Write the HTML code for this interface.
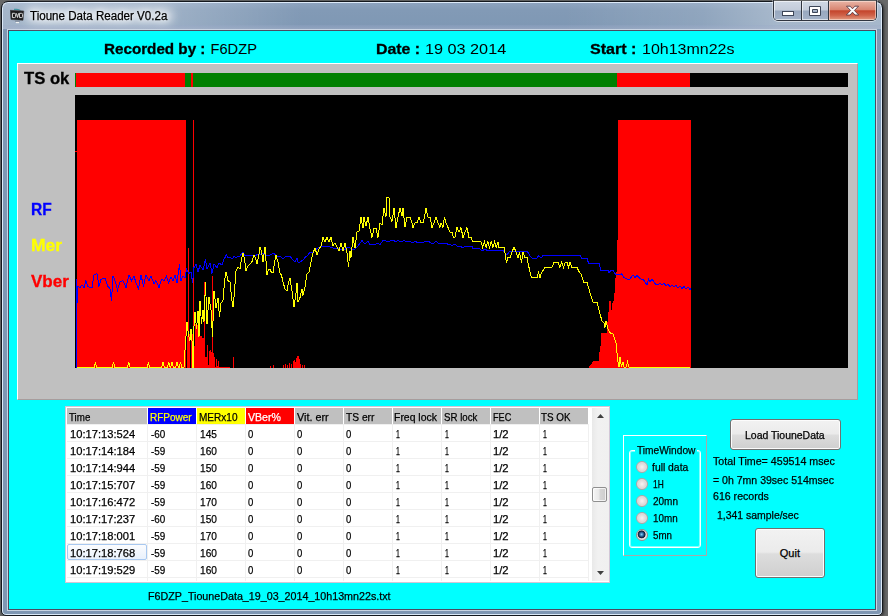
<!DOCTYPE html>
<html>
<head>
<meta charset="utf-8">
<title>Tioune Data Reader V0.2a</title>
<style>
*{box-sizing:border-box;margin:0;padding:0}
html,body{width:888px;height:616px;overflow:hidden}
body{background:#686969;font-family:"Liberation Sans",sans-serif;font-size:11px;color:#000;position:relative}
.abs{position:absolute}
#win{left:1px;top:1px;width:882px;height:615px;border-radius:7px 7px 5px 5px;background:linear-gradient(180deg,#8ea4c0 0px,#829ab6 8px,#7f98b4 24px,#7f97b3 615px);border:1px solid #14181e;box-shadow:inset 0 0 0 1px rgba(225,238,252,.95),1px 1px 3px 0 rgba(0,0,0,.55)}
#client{left:7px;top:29px;width:870px;height:582px;background:#00ffff;border:1px solid #c8d4e2;box-shadow:inset 0 0 0 1px #4a4c62}
.t{position:absolute;white-space:nowrap;line-height:1;transform-origin:0 50%}
#title{left:29px;top:9px;font-size:12px}
.hb{font-weight:bold;font-size:15px}
.hv{font-size:16px}
#panel{left:17px;top:63px;width:841px;height:337px;background:#c0c0c0;border-top:1px solid #fff;border-left:1px solid #fff;border-right:1px solid #a89c9c;border-bottom:1px solid #a89c9c}
#tsbar{left:75px;top:73px;width:773px;height:14px;background:#000}
#chart{left:75px;top:95px}
.lbl{font-weight:bold;font-size:17px}
#grid{left:65px;top:406px;width:545px;height:177px;background:#fff;border:1px solid #d2c6d6}
.hd{position:absolute;top:408px;height:16px;background:#c0c0c0;line-height:17px;padding-left:2px;white-space:nowrap;overflow:hidden}
.c{position:absolute;height:17px;line-height:17px;white-space:nowrap}
.btn{position:absolute;border:1px solid #707070;border-radius:3px;background:linear-gradient(180deg,#f2f2f2 0%,#ebebeb 48%,#dddddd 52%,#cfcfcf 100%);box-shadow:inset 0 0 0 1px #fcfcfc;text-align:center}
#tsbar i{position:absolute;top:0;height:14px}
.gl{position:absolute;background:#f0f0f0}
.sel{left:67px;top:544px;width:80px;height:16px;border:1px solid #a8c8f0;border-radius:2px;background:linear-gradient(180deg,#fbfcfe,#e9f1fc)}
.radio{position:absolute;width:12px;height:12px;border-radius:50%;border:1px solid #b3a3a3;background:radial-gradient(circle at 50% 50%,#f5f2f2 0,#dcd8d8 55%,#e6e6e6 100%)}
.radio.on{border-color:#9a8c8c;background:radial-gradient(circle at 46% 44%,#8fd0f4 0,#2f74ac 22%,#142446 40%,#1a2238 46%,#e0dddd 55%,#efefef 100%)}
</style>
</head>
<body>
<div id="win" class="abs"></div>
<div id="client" class="abs"></div>
<div class="abs" style="left:3px;top:3px;width:878px;height:26px;background:linear-gradient(90deg,rgba(255,255,255,.28) 0,rgba(255,255,255,.22) 170px,rgba(255,255,255,0) 300px,rgba(255,255,255,0) 560px,rgba(255,255,255,.12) 700px,rgba(255,255,255,.3) 775px,rgba(255,255,255,.3) 878px)"></div>
<div class="abs" style="left:3px;top:25px;width:878px;height:4px;background:linear-gradient(180deg,rgba(150,165,200,.25),rgba(170,180,205,.45))"></div>
<div class="abs" style="left:24px;top:7px;width:150px;height:17px;border-radius:8px;background:rgba(255,255,255,.42);filter:blur(5px)"></div>
<div class="abs" style="left:773px;top:0;width:104px;height:21px;border:1px solid #30353f;border-top:0;border-radius:0 0 5px 5px;box-shadow:0 1px 0 rgba(255,255,255,.55),-1px 0 0 rgba(255,255,255,.35),1px 0 0 rgba(255,255,255,.35);overflow:hidden">
<div class="abs" style="left:0;top:1px;width:28px;height:19px;background:linear-gradient(180deg,#d0d8e4 0,#c3ccda 48%,#98a8bf 52%,#a3b2c8 100%);box-shadow:inset 0 0 0 1px rgba(255,255,255,.6)"></div>
<div class="abs" style="left:27px;top:1px;width:1px;height:19px;background:#30353f"></div>
<div class="abs" style="left:28px;top:1px;width:27px;height:19px;background:linear-gradient(180deg,#d0d8e4 0,#c3ccda 48%,#98a8bf 52%,#a3b2c8 100%);box-shadow:inset 0 0 0 1px rgba(255,255,255,.6)"></div>
<div class="abs" style="left:54px;top:1px;width:1px;height:19px;background:#30353f"></div>
<div class="abs" style="left:55px;top:1px;width:47px;height:19px;background:linear-gradient(180deg,#e8b4a6 0,#d98672 45%,#c4452c 52%,#cf6148 75%,#e39a80 100%);box-shadow:inset 0 0 0 1px rgba(255,235,225,.55)"></div>
</div>
<svg class="abs" style="left:773px;top:0" width="104" height="21" viewBox="0 0 104 21">
<rect x="9.5" y="11.5" width="11" height="4" fill="#fff" stroke="#3d4658" stroke-width="1"/>
<path d="M36.5 6.5h11v9h-11z M39.5 9.5v3h5v-3z" fill="#fff" fill-rule="evenodd" stroke="#3d4658" stroke-width="1"/>
<path d="M73.5 6.2 l3.6 0 l2.4 2.6 l2.4 -2.6 l3.6 0 l-4.1 4.3 l4.3 4.5 l-3.7 0 l-2.5 -2.8 l-2.5 2.8 l-3.7 0 l4.3 -4.5 z" fill="#fff" stroke="#5a3a44" stroke-width="0.9"/>
</svg>
<svg class="abs" style="left:10px;top:8px" width="15" height="16" viewBox="0 0 15 16">
<path d="M4 1.3 Q7 0.8 10.5 2.4" stroke="#2f8f9b" stroke-width="1" fill="none"/>
<path d="M0.2 2.3 L13.8 3 L13 12.3 L1 11.5z" fill="#1d1c1e" stroke="#3a3a40" stroke-width="0.6"/>
<path d="M2.4 5.3h2q1.2 0 1.2 1.1v2.1q0 1.1-1.2 1.1h-2z M6.4 5.3l1.1 4.2l1.1-4.2 M9.4 5.3h2q1.2 0 1.2 1.1v2.1q0 1.1-1.2 1.1h-2z" fill="none" stroke="#dcdcdc" stroke-width="1"/>
<path d="M5 13.2h5" stroke="#7d8796" stroke-width="1"/><path d="M5.8 14.6h3.2" stroke="#f4f4f4" stroke-width="1.1"/>
</svg>


<div id="panel" class="abs"></div>
<div id="tsbar" class="abs">
<i style="left:0;width:1px;background:#008000"></i>
<i style="left:1px;width:109px;background:#ff0000"></i>
<i style="left:110px;width:6px;background:#008000"></i>
<i style="left:116px;width:2px;background:#ff0000"></i>
<i style="left:118px;width:424px;background:#008000"></i>
<i style="left:542px;width:73px;background:#ff0000"></i>
</div>
<svg id="chart" class="abs" width="773" height="273" viewBox="0 0 773 273" shape-rendering="crispEdges">
<rect width="773" height="273" fill="#000"/>
<path fill="#ff0000" d="M2 25h109v248h-109zM543 25h73v248h-73zM0 56h2v1h-2zM113 153h1v120h-1zM118 25h1v248h-1zM129 187h1v86h-1zM137 181h1v92h-1zM112 241h1v32h-1zM113 243h1v30h-1zM114 239h1v34h-1zM116 246h1v27h-1zM117 239h1v34h-1zM119 251h1v22h-1zM120 229.333h1v43.6667h-1zM121 233.667h1v39.3333h-1zM122 230h1v43h-1zM123 231.333h1v41.6667h-1zM124 226.667h1v46.3333h-1zM125 241h1v32h-1zM126 241h1v32h-1zM127 243h1v30h-1zM128 243h1v30h-1zM129 256h1v17h-1zM130 262h1v11h-1zM131 262h1v11h-1zM132 250h1v23h-1zM133 270.333h1v2.66667h-1zM134 255.667h1v17.3333h-1zM135 255h1v18h-1zM136 257.333h1v15.6667h-1zM137 263.667h1v9.33333h-1zM138 258h1v15h-1zM139 262h1v11h-1zM140 272h1v1h-1zM141 264h1v9h-1zM142 271h1v2h-1zM143 266h1v7h-1zM144 272h1v1h-1zM145 272h1v1h-1zM146 272h1v1h-1zM147 272h1v1h-1zM148 272h1v1h-1zM149 272h1v1h-1zM150 272h1v1h-1zM151 272h1v1h-1zM152 272h1v1h-1zM153 272h1v1h-1zM154 272h1v1h-1zM158 262h1v11h-1zM195 271h1v2h-1zM198 270h1v3h-1zM208 270h1v3h-1zM210 269h1v4h-1zM212 270h1v3h-1zM214 268h1v5h-1zM216 269h1v4h-1zM218 266h1v7h-1zM219 265h1v8h-1zM220 267h1v6h-1zM221 263h1v10h-1zM222 261h1v12h-1zM223 261h1v12h-1zM224 264h1v9h-1zM225 269h1v4h-1zM227 270h1v3h-1zM229 270h1v3h-1zM514 271h1v2h-1zM515 270h1v3h-1zM516 269h1v4h-1zM517 267h1v6h-1zM518 266h1v7h-1zM519 266h1v7h-1zM520 266h1v7h-1zM521 266h1v7h-1zM522 266h1v7h-1zM523 266h1v7h-1zM524 257h1v16h-1zM525 251h1v22h-1zM526 238h1v35h-1zM527 238h1v35h-1zM528 238h1v35h-1zM529 238h1v35h-1zM530 238h1v35h-1zM531 238h1v35h-1zM532 227h1v46h-1zM533 217h1v56h-1zM534 206h1v67h-1zM535 206h1v67h-1zM536 215h1v58h-1zM537 208h1v65h-1zM538 206h1v67h-1zM539 198h1v75h-1zM540 183h1v90h-1zM541 177h1v96h-1zM542 145h1v128h-1z"/>
<path fill="none" stroke="#0000ff" stroke-width="1" d="M1.0 273.0 L1.0 184.0 L2.0 208.0 L3.0 191.5 L5.0 192.6 L7.0 190.0 L9.0 192.6 L11.0 185.6 L13.0 191.5 L15.0 192.6 L17.0 192.6 L19.0 179.7 L22.0 178.5 L24.0 191.5 L26.0 184.4 L30.0 183.0 L33.0 191.5 L35.0 193.8 L36.5 205.6 L38.0 181.0 L40.0 185.6 L42.5 195.0 L45.0 186.8 L48.0 185.6 L51.0 192.6 L54.0 179.7 L56.5 185.6 L59.0 181.0 L61.0 188.0 L63.5 193.8 L66.0 179.7 L68.5 191.5 L71.0 179.7 L74.0 185.6 L76.0 181.0 L79.0 189.0 L81.0 185.6 L84.0 192.6 L86.5 184.4 L89.0 185.6 L91.5 181.0 L93.5 188.0 L96.0 182.0 L98.0 185.6 L100.0 179.7 L102.0 188.0 L104.5 169.0 L106.0 185.6 L108.0 181.0 L110.0 183.0 L111.5 174.0 L114.0 178.5 L116.0 177.0 L117.5 188.0 L119.0 172.6 L121.0 169.0 L123.0 177.0 L125.0 170.0 L128.0 175.0 L130.5 164.4 L132.0 173.8 L135.0 168.0 L137.0 178.5 L139.0 169.0 L142.0 172.6 L144.0 168.0 L147.0 170.0 L149.0 164.4 L151.5 159.7 L153.0 163.0 L155.0 162.0 L157.0 164.0 L159.0 161.5 L161.0 163.0 L163.0 161.0 L165.0 161.0 L168.0 157.0 L170.0 161.0 L175.0 160.0 L180.0 161.0 L183.0 159.0 L185.0 160.0 L188.0 158.0 L191.0 161.0 L195.0 160.0 L199.0 158.0 L201.0 161.0 L205.0 161.0 L208.0 164.0 L211.0 161.0 L215.0 161.0 L217.0 164.0 L220.0 167.0 L222.0 163.0 L223.0 167.0 L225.0 167.0 L228.0 165.0 L230.0 162.5 L233.0 160.0 L235.0 157.0 L237.0 158.0 L240.0 155.0 L245.0 152.0 L250.0 151.5 L255.0 152.0 L258.0 153.0 L260.0 154.0 L263.0 153.0 L265.0 155.0 L268.0 154.0 L270.0 155.0 L272.0 152.0 L275.0 153.0 L278.0 155.0 L280.0 154.0 L283.0 151.0 L285.0 148.0 L287.0 145.6 L289.0 148.0 L290.0 149.0 L293.0 146.0 L295.0 150.0 L300.0 149.5 L303.0 148.0 L305.0 149.5 L308.0 145.6 L311.0 146.0 L313.0 147.0 L315.0 146.0 L318.0 145.0 L321.0 147.0 L323.0 145.5 L326.0 147.0 L329.0 145.5 L332.0 147.0 L335.0 146.7 L338.0 148.0 L340.0 146.0 L343.0 148.0 L345.0 147.0 L348.0 148.0 L350.0 146.0 L353.0 146.0 L356.0 148.0 L359.0 148.0 L361.0 146.0 L363.0 148.0 L365.0 148.0 L370.0 148.5 L375.0 149.5 L377.0 151.0 L380.0 148.8 L382.0 151.0 L385.0 151.0 L388.0 153.0 L390.0 151.0 L397.0 151.5 L398.0 153.6 L405.0 154.0 L407.0 156.0 L410.0 154.0 L413.0 156.0 L415.0 155.0 L420.0 155.0 L422.0 156.0 L425.0 155.5 L428.0 155.5 L430.0 158.0 L432.0 160.0 L435.0 156.0 L445.0 156.0 L452.0 156.0 L455.0 160.8 L457.0 163.0 L462.0 163.0 L463.5 160.8 L466.0 163.0 L468.0 160.5 L505.0 160.5 L507.0 163.5 L512.0 163.5 L513.5 168.0 L524.0 168.0 L526.0 175.6 L533.0 175.6 L534.0 177.7 L536.0 175.6 L538.0 175.6 L540.0 178.8 L542.0 179.8 L545.0 179.8 L547.0 178.8 L549.0 182.5 L552.0 184.0 L554.0 185.0 L556.0 182.5 L558.0 179.8 L560.0 182.5 L562.0 180.4 L564.0 182.5 L566.0 184.0 L568.0 184.0 L570.0 187.0 L572.0 189.7 L573.5 184.0 L575.0 187.0 L577.0 184.0 L579.0 187.0 L581.0 189.7 L583.0 189.7 L585.0 188.0 L587.0 190.0 L589.0 188.0 L591.0 191.0 L593.0 189.0 L595.0 192.0 L597.0 190.0 L599.0 192.0 L601.0 190.5 L603.0 193.0 L605.0 191.0 L607.0 193.5 L609.0 191.5 L611.0 194.0 L613.0 192.0 L615.0 194.5 L616.0 193.0"/>
<path fill="none" stroke="#ffff00" stroke-width="1" d="M2.0 272.0 L19.2 272.0 L20.4 267.0 L21.6 272.0 L37.3 272.0 L38.5 267.0 L39.7 272.0 L52.6 272.0 L53.8 267.0 L55.0 272.0 L72.2 272.0 L73.4 267.0 L74.6 272.0 L86.8 272.0 L88.0 267.0 L89.2 272.0 L92.6 272.0 L93.8 267.0 L95.0 272.0 L95.8 272.0 L97.0 267.0 L98.2 272.0 L100.8 272.0 L102.0 267.0 L103.2 272.0 L104.4 272.0 L105.6 267.0 L106.8 272.0 L109.0 272.0 L109.5 262.0 L111.0 241.0 L112.0 226.8 L113.5 239.7 L115.0 245.6 L116.0 233.8 L117.5 251.5 L118.0 273.0 L118.5 251.0 L119.0 231.5 L120.0 217.0 L121.5 233.8 L123.0 216.0 L124.0 242.0 L125.0 205.6 L126.5 229.0 L128.0 215.0 L129.0 226.8 L130.5 186.8 L132.0 229.0 L134.0 202.0 L136.0 215.0 L137.5 242.0 L139.0 196.0 L141.0 212.6 L143.0 203.0 L144.5 222.0 L146.0 208.0 L148.0 205.6 L149.5 186.8 L151.0 177.0 L153.0 185.6 L155.0 187.0 L156.5 202.4 L158.0 212.0 L159.5 196.5 L161.0 176.0 L163.0 172.3 L165.0 174.0 L166.5 164.0 L168.0 158.0 L169.5 164.1 L171.0 176.0 L173.0 170.9 L175.0 169.0 L177.0 166.6 L179.0 160.0 L180.5 162.9 L182.0 169.0 L183.5 162.1 L185.0 152.0 L186.5 156.6 L188.0 167.0 L190.0 152.0 L192.0 180.0 L193.5 174.6 L195.0 174.0 L196.5 177.6 L198.0 178.0 L199.5 167.4 L201.0 160.0 L203.0 167.1 L205.0 178.0 L206.5 180.2 L208.0 187.0 L210.0 193.8 L212.0 196.0 L213.5 187.8 L215.0 183.0 L217.0 196.0 L219.0 212.0 L221.0 198.0 L222.0 188.0 L223.0 207.0 L225.0 202.6 L227.0 194.0 L228.0 200.5 L230.0 192.0 L232.0 179.0 L234.0 177.0 L236.0 167.0 L238.0 158.0 L240.0 153.0 L242.0 160.0 L244.0 154.0 L246.0 151.0 L248.0 142.5 L250.0 146.7 L252.0 142.5 L254.0 146.7 L256.0 142.5 L258.0 151.0 L260.0 147.7 L262.0 152.0 L264.0 156.0 L266.0 148.0 L268.0 156.0 L270.0 148.0 L272.0 158.0 L273.5 172.0 L275.0 156.0 L276.0 162.5 L278.0 142.5 L280.0 153.0 L282.0 137.0 L284.0 136.0 L286.0 122.4 L288.0 133.0 L289.0 122.4 L291.0 131.0 L293.0 122.0 L295.0 134.0 L297.0 142.5 L299.0 133.0 L301.0 133.0 L303.0 142.5 L305.0 127.7 L307.0 130.0 L309.0 113.0 L311.0 122.0 L312.0 102.4 L314.0 102.4 L315.0 122.0 L317.0 126.6 L319.0 113.0 L321.0 133.0 L323.0 122.0 L325.0 113.0 L327.0 121.0 L328.0 113.0 L330.0 132.0 L332.0 122.0 L335.0 122.0 L337.0 127.7 L338.0 133.0 L340.0 127.7 L342.0 127.7 L344.0 122.0 L346.0 127.7 L348.0 127.7 L349.5 122.0 L351.0 113.0 L353.0 122.0 L355.0 122.0 L357.0 132.5 L359.0 127.7 L361.0 122.0 L363.0 127.7 L365.0 132.5 L366.0 127.7 L368.0 132.5 L369.5 122.0 L371.0 127.7 L373.0 132.5 L375.0 137.0 L377.0 137.0 L378.5 142.5 L380.0 142.5 L382.0 132.5 L384.0 137.0 L386.0 132.5 L388.0 142.5 L390.0 137.0 L392.0 132.5 L394.0 142.5 L396.0 142.5 L398.0 146.7 L406.0 146.7 L407.7 152.4 L409.4 146.7 L411.1 152.4 L412.8 146.7 L414.5 152.4 L416.2 146.7 L417.9 152.4 L419.6 146.7 L421.3 152.4 L423.0 146.7 L423.0 152.4 L429.0 152.4 L430.0 158.0 L431.5 167.8 L433.0 162.5 L435.0 162.5 L437.0 157.0 L439.0 152.0 L441.0 157.0 L443.0 162.5 L444.5 157.0 L446.5 167.8 L448.0 157.0 L450.0 162.5 L452.0 162.5 L453.0 167.8 L455.0 177.0 L456.5 182.5 L462.0 182.5 L463.5 177.7 L465.0 182.5 L466.5 177.7 L470.0 172.4 L477.0 172.4 L479.0 167.0 L483.0 167.0 L485.0 172.4 L486.5 167.0 L488.5 172.4 L490.5 167.0 L492.0 167.0 L493.5 172.4 L495.0 167.0 L497.0 172.4 L502.0 172.4 L504.0 176.6 L506.0 178.8 L508.5 187.0 L512.0 187.0 L515.0 197.7 L518.0 207.0 L522.0 207.0 L525.0 218.8 L527.0 226.0 L529.0 228.0 L530.0 232.5 L531.0 226.0 L533.0 233.6 L535.0 237.8 L538.0 239.0 L541.0 248.0 L543.0 267.0 L544.0 272.0 L545.0 262.0 L546.5 272.0 L548.0 267.0 L549.0 272.0 L551.0 272.0 L552.5 267.0 L554.0 272.0 L615.0 272.0"/>
</svg>

<div id="grid" class="abs"></div>
<i class="gl" style="left:67px;top:424px;width:522px;height:1px"></i><i class="gl" style="left:67px;top:441px;width:522px;height:1px"></i><i class="gl" style="left:67px;top:458px;width:522px;height:1px"></i><i class="gl" style="left:67px;top:475px;width:522px;height:1px"></i><i class="gl" style="left:67px;top:492px;width:522px;height:1px"></i><i class="gl" style="left:67px;top:509px;width:522px;height:1px"></i><i class="gl" style="left:67px;top:526px;width:522px;height:1px"></i><i class="gl" style="left:67px;top:543px;width:522px;height:1px"></i><i class="gl" style="left:67px;top:560px;width:522px;height:1px"></i><i class="gl" style="left:67px;top:577px;width:522px;height:1px"></i>
<i class="gl" style="left:147px;top:425px;width:1px;height:156px"></i><i class="gl" style="left:196px;top:425px;width:1px;height:156px"></i><i class="gl" style="left:245px;top:425px;width:1px;height:156px"></i><i class="gl" style="left:294px;top:425px;width:1px;height:156px"></i><i class="gl" style="left:343px;top:425px;width:1px;height:156px"></i><i class="gl" style="left:392px;top:425px;width:1px;height:156px"></i><i class="gl" style="left:441px;top:425px;width:1px;height:156px"></i><i class="gl" style="left:490px;top:425px;width:1px;height:156px"></i><i class="gl" style="left:539px;top:425px;width:1px;height:156px"></i><i class="gl" style="left:588px;top:425px;width:1px;height:156px"></i>
<div class="sel abs"></div>
<div class="hd" style="left:67px;width:80px;background:#c0c0c0;color:#000"></div><div class="hd" style="left:148px;width:48px;background:#0000ff;color:#ffff00"></div><div class="hd" style="left:197px;width:48px;background:#ffff00;color:#000"></div><div class="hd" style="left:246px;width:48px;background:#ff0000;color:#fff"></div><div class="hd" style="left:295px;width:48px;background:#c0c0c0;color:#000"></div><div class="hd" style="left:344px;width:48px;background:#c0c0c0;color:#000"></div><div class="hd" style="left:393px;width:48px;background:#c0c0c0;color:#000"></div><div class="hd" style="left:442px;width:48px;background:#c0c0c0;color:#000"></div><div class="hd" style="left:491px;width:48px;background:#c0c0c0;color:#000"></div><div class="hd" style="left:540px;width:48px;background:#c0c0c0;color:#000"></div>









<div class="abs" style="left:592px;top:408px;width:17px;height:173px;background:linear-gradient(90deg,#e9e9e9,#f1f1f1 35%,#f0f0f0)"></div>
<div class="abs" style="left:592px;top:487px;width:15px;height:15px;border:1px solid #8f8f8f;border-radius:2px;background:linear-gradient(90deg,#f5f5f5 0,#e9e9e9 45%,#d6d6d6 55%,#cdcdcd 100%);box-shadow:inset 0 0 0 1px rgba(255,255,255,.7)"></div>
<svg class="abs" style="left:597px;top:414px" width="7" height="4" viewBox="0 0 7 4"><path d="M0 4 L3.5 0 L7 4z" fill="#404040"/></svg>
<svg class="abs" style="left:597px;top:571px" width="7" height="4" viewBox="0 0 7 4"><path d="M0 0 L7 0 L3.5 4z" fill="#404040"/></svg>

<div class="abs" style="left:623px;top:435px;width:84px;height:121px;border:1px solid #fff;border-right-color:#a8a8a8;border-bottom-color:#a8a8a8"></div>
<div class="abs" style="left:629px;top:450px;width:72px;height:98px;border:1px solid #fff;border-radius:3px;box-shadow:inset 0 0 0 1px rgba(255,255,255,.5)"></div>
<div class="abs" style="left:635px;top:448px;width:62px;height:5px;background:#00ffff"></div>
<div class="radio" style="left:636px;top:461px"></div><div class="radio" style="left:636px;top:478px"></div><div class="radio" style="left:636px;top:495px"></div><div class="radio" style="left:636px;top:512px"></div><div class="radio on" style="left:636px;top:529px"></div><div class="btn" style="left:730px;top:419px;width:111px;height:31px;line-height:29px"></div>
<div class="btn" style="left:755px;top:528px;width:70px;height:50px"></div>
<div class="t" style="left:30.40px;top:9.75px;font-size:12.5px;transform:scaleX(0.9266);-webkit-text-stroke:0.25px;text-shadow:0 0 5px #fff,0 0 9px #fff,0 0 12px #fff;">Tioune Data Reader V0.2a</div>
<div class="t" style="left:103.50px;top:41.66px;font-size:14.67px;font-weight:bold;-webkit-text-stroke:0.3px;transform:scaleX(1.0377);">Recorded by :</div>
<div class="t" style="left:210.50px;top:41.66px;font-size:14.67px;">F6DZP</div>
<div class="t" style="left:375.50px;top:41.66px;font-size:14.67px;font-weight:bold;-webkit-text-stroke:0.3px;transform:scaleX(1.0844);">Date :</div>
<div class="t" style="left:425.29px;top:41.66px;font-size:14.67px;transform:scaleX(1.1066);">19 03 2014</div>
<div class="t" style="left:589.50px;top:41.66px;font-size:14.67px;font-weight:bold;-webkit-text-stroke:0.3px;transform:scaleX(1.0973);">Start :</div>
<div class="t" style="left:642.41px;top:41.66px;font-size:14.67px;transform:scaleX(1.0909);">10h13mn22s</div>
<div class="t" style="left:23.60px;top:70.50px;font-size:16px;font-weight:bold;-webkit-text-stroke:0.3px;transform:scaleX(1.0398);">TS ok</div>
<div class="t" style="left:31.03px;top:201.50px;font-size:16px;font-weight:bold;-webkit-text-stroke:0.3px;color:#0000ff;transform:scaleX(0.9730);">RF</div>
<div class="t" style="left:30.91px;top:237.50px;font-size:16px;font-weight:bold;-webkit-text-stroke:0.3px;color:#ffff00;transform:scaleX(1.0945);">Mer</div>
<div class="t" style="left:31.00px;top:273.50px;font-size:16px;font-weight:bold;-webkit-text-stroke:0.3px;color:#ff0000;transform:scaleX(1.0638);">Vber</div>
<div class="t" style="left:69.00px;top:411.50px;font-size:11px;transform:scaleX(0.8864);-webkit-text-stroke:0.25px;">Time</div>
<div class="t" style="left:149.50px;top:411.50px;font-size:11px;color:#ffff00;transform:scaleX(0.9095);-webkit-text-stroke:0.25px;">RFPower</div>
<div class="t" style="left:198.60px;top:411.50px;font-size:11px;transform:scaleX(0.9129);-webkit-text-stroke:0.25px;">MERx10</div>
<div class="t" style="left:247.60px;top:411.50px;font-size:11px;color:#fff;transform:scaleX(0.9607);-webkit-text-stroke:0.25px;">VBer%</div>
<div class="t" style="left:296.50px;top:411.50px;font-size:11px;transform:scaleX(0.9837);-webkit-text-stroke:0.25px;">Vit. err</div>
<div class="t" style="left:345.60px;top:411.50px;font-size:11px;transform:scaleX(0.9290);-webkit-text-stroke:0.25px;">TS err</div>
<div class="t" style="left:394.30px;top:411.50px;font-size:11px;transform:scaleX(0.9489);-webkit-text-stroke:0.25px;">Freq lock</div>
<div class="t" style="left:443.60px;top:411.50px;font-size:11px;transform:scaleX(0.8802);-webkit-text-stroke:0.25px;">SR lock</div>
<div class="t" style="left:492.60px;top:411.50px;font-size:11px;transform:scaleX(0.8297);-webkit-text-stroke:0.25px;">FEC</div>
<div class="t" style="left:540.70px;top:411.50px;font-size:11px;transform:scaleX(0.8970);-webkit-text-stroke:0.25px;">TS OK</div>
<div class="t" style="left:69.80px;top:428.50px;font-size:11px;transform:scaleX(1.0139);-webkit-text-stroke:0.25px;">10:17:13:524</div>
<div class="t" style="left:150.60px;top:428.50px;font-size:11px;transform:scaleX(0.8998);-webkit-text-stroke:0.25px;">-60</div>
<div class="t" style="left:199.70px;top:428.50px;font-size:11px;transform:scaleX(0.9213);-webkit-text-stroke:0.25px;">145</div>
<div class="t" style="left:247.60px;top:428.50px;font-size:11px;transform:scaleX(0.8667);-webkit-text-stroke:0.25px;">0</div>
<div class="t" style="left:296.60px;top:428.50px;font-size:11px;transform:scaleX(0.8667);-webkit-text-stroke:0.25px;">0</div>
<div class="t" style="left:346.20px;top:428.50px;font-size:11px;transform:scaleX(0.8667);-webkit-text-stroke:0.25px;">0</div>
<div class="t" style="left:395.70px;top:428.50px;font-size:11px;transform:scaleX(0.6333);-webkit-text-stroke:0.25px;">1</div>
<div class="t" style="left:444.90px;top:428.50px;font-size:11px;transform:scaleX(0.6333);-webkit-text-stroke:0.25px;">1</div>
<div class="t" style="left:493.40px;top:428.50px;font-size:11px;transform:scaleX(1.0215);-webkit-text-stroke:0.25px;">1/2</div>
<div class="t" style="left:542.90px;top:428.50px;font-size:11px;transform:scaleX(0.6333);-webkit-text-stroke:0.25px;">1</div>
<div class="t" style="left:69.80px;top:445.50px;font-size:11px;transform:scaleX(1.0139);-webkit-text-stroke:0.25px;">10:17:14:184</div>
<div class="t" style="left:150.60px;top:445.50px;font-size:11px;transform:scaleX(0.8998);-webkit-text-stroke:0.25px;">-59</div>
<div class="t" style="left:199.70px;top:445.50px;font-size:11px;transform:scaleX(0.9213);-webkit-text-stroke:0.25px;">160</div>
<div class="t" style="left:247.60px;top:445.50px;font-size:11px;transform:scaleX(0.8667);-webkit-text-stroke:0.25px;">0</div>
<div class="t" style="left:296.60px;top:445.50px;font-size:11px;transform:scaleX(0.8667);-webkit-text-stroke:0.25px;">0</div>
<div class="t" style="left:346.20px;top:445.50px;font-size:11px;transform:scaleX(0.8667);-webkit-text-stroke:0.25px;">0</div>
<div class="t" style="left:395.70px;top:445.50px;font-size:11px;transform:scaleX(0.6333);-webkit-text-stroke:0.25px;">1</div>
<div class="t" style="left:444.90px;top:445.50px;font-size:11px;transform:scaleX(0.6333);-webkit-text-stroke:0.25px;">1</div>
<div class="t" style="left:493.40px;top:445.50px;font-size:11px;transform:scaleX(1.0215);-webkit-text-stroke:0.25px;">1/2</div>
<div class="t" style="left:542.90px;top:445.50px;font-size:11px;transform:scaleX(0.6333);-webkit-text-stroke:0.25px;">1</div>
<div class="t" style="left:69.80px;top:462.50px;font-size:11px;transform:scaleX(1.0139);-webkit-text-stroke:0.25px;">10:17:14:944</div>
<div class="t" style="left:150.60px;top:462.50px;font-size:11px;transform:scaleX(0.8998);-webkit-text-stroke:0.25px;">-59</div>
<div class="t" style="left:199.70px;top:462.50px;font-size:11px;transform:scaleX(0.9213);-webkit-text-stroke:0.25px;">150</div>
<div class="t" style="left:247.60px;top:462.50px;font-size:11px;transform:scaleX(0.8667);-webkit-text-stroke:0.25px;">0</div>
<div class="t" style="left:296.60px;top:462.50px;font-size:11px;transform:scaleX(0.8667);-webkit-text-stroke:0.25px;">0</div>
<div class="t" style="left:346.20px;top:462.50px;font-size:11px;transform:scaleX(0.8667);-webkit-text-stroke:0.25px;">0</div>
<div class="t" style="left:395.70px;top:462.50px;font-size:11px;transform:scaleX(0.6333);-webkit-text-stroke:0.25px;">1</div>
<div class="t" style="left:444.90px;top:462.50px;font-size:11px;transform:scaleX(0.6333);-webkit-text-stroke:0.25px;">1</div>
<div class="t" style="left:493.40px;top:462.50px;font-size:11px;transform:scaleX(1.0215);-webkit-text-stroke:0.25px;">1/2</div>
<div class="t" style="left:542.90px;top:462.50px;font-size:11px;transform:scaleX(0.6333);-webkit-text-stroke:0.25px;">1</div>
<div class="t" style="left:69.80px;top:479.50px;font-size:11px;transform:scaleX(1.0139);-webkit-text-stroke:0.25px;">10:17:15:707</div>
<div class="t" style="left:150.60px;top:479.50px;font-size:11px;transform:scaleX(0.8998);-webkit-text-stroke:0.25px;">-59</div>
<div class="t" style="left:199.70px;top:479.50px;font-size:11px;transform:scaleX(0.9213);-webkit-text-stroke:0.25px;">160</div>
<div class="t" style="left:247.60px;top:479.50px;font-size:11px;transform:scaleX(0.8667);-webkit-text-stroke:0.25px;">0</div>
<div class="t" style="left:296.60px;top:479.50px;font-size:11px;transform:scaleX(0.8667);-webkit-text-stroke:0.25px;">0</div>
<div class="t" style="left:346.20px;top:479.50px;font-size:11px;transform:scaleX(0.8667);-webkit-text-stroke:0.25px;">0</div>
<div class="t" style="left:395.70px;top:479.50px;font-size:11px;transform:scaleX(0.6333);-webkit-text-stroke:0.25px;">1</div>
<div class="t" style="left:444.90px;top:479.50px;font-size:11px;transform:scaleX(0.6333);-webkit-text-stroke:0.25px;">1</div>
<div class="t" style="left:493.40px;top:479.50px;font-size:11px;transform:scaleX(1.0215);-webkit-text-stroke:0.25px;">1/2</div>
<div class="t" style="left:542.90px;top:479.50px;font-size:11px;transform:scaleX(0.6333);-webkit-text-stroke:0.25px;">1</div>
<div class="t" style="left:69.80px;top:496.50px;font-size:11px;transform:scaleX(1.0139);-webkit-text-stroke:0.25px;">10:17:16:472</div>
<div class="t" style="left:150.60px;top:496.50px;font-size:11px;transform:scaleX(0.8998);-webkit-text-stroke:0.25px;">-59</div>
<div class="t" style="left:199.70px;top:496.50px;font-size:11px;transform:scaleX(0.9213);-webkit-text-stroke:0.25px;">170</div>
<div class="t" style="left:247.60px;top:496.50px;font-size:11px;transform:scaleX(0.8667);-webkit-text-stroke:0.25px;">0</div>
<div class="t" style="left:296.60px;top:496.50px;font-size:11px;transform:scaleX(0.8667);-webkit-text-stroke:0.25px;">0</div>
<div class="t" style="left:346.20px;top:496.50px;font-size:11px;transform:scaleX(0.8667);-webkit-text-stroke:0.25px;">0</div>
<div class="t" style="left:395.70px;top:496.50px;font-size:11px;transform:scaleX(0.6333);-webkit-text-stroke:0.25px;">1</div>
<div class="t" style="left:444.90px;top:496.50px;font-size:11px;transform:scaleX(0.6333);-webkit-text-stroke:0.25px;">1</div>
<div class="t" style="left:493.40px;top:496.50px;font-size:11px;transform:scaleX(1.0215);-webkit-text-stroke:0.25px;">1/2</div>
<div class="t" style="left:542.90px;top:496.50px;font-size:11px;transform:scaleX(0.6333);-webkit-text-stroke:0.25px;">1</div>
<div class="t" style="left:69.80px;top:513.50px;font-size:11px;transform:scaleX(1.0139);-webkit-text-stroke:0.25px;">10:17:17:237</div>
<div class="t" style="left:150.60px;top:513.50px;font-size:11px;transform:scaleX(0.8998);-webkit-text-stroke:0.25px;">-60</div>
<div class="t" style="left:199.70px;top:513.50px;font-size:11px;transform:scaleX(0.9213);-webkit-text-stroke:0.25px;">150</div>
<div class="t" style="left:247.60px;top:513.50px;font-size:11px;transform:scaleX(0.8667);-webkit-text-stroke:0.25px;">0</div>
<div class="t" style="left:296.60px;top:513.50px;font-size:11px;transform:scaleX(0.8667);-webkit-text-stroke:0.25px;">0</div>
<div class="t" style="left:346.20px;top:513.50px;font-size:11px;transform:scaleX(0.8667);-webkit-text-stroke:0.25px;">0</div>
<div class="t" style="left:395.70px;top:513.50px;font-size:11px;transform:scaleX(0.6333);-webkit-text-stroke:0.25px;">1</div>
<div class="t" style="left:444.90px;top:513.50px;font-size:11px;transform:scaleX(0.6333);-webkit-text-stroke:0.25px;">1</div>
<div class="t" style="left:493.40px;top:513.50px;font-size:11px;transform:scaleX(1.0215);-webkit-text-stroke:0.25px;">1/2</div>
<div class="t" style="left:542.90px;top:513.50px;font-size:11px;transform:scaleX(0.6333);-webkit-text-stroke:0.25px;">1</div>
<div class="t" style="left:69.80px;top:530.50px;font-size:11px;transform:scaleX(1.0139);-webkit-text-stroke:0.25px;">10:17:18:001</div>
<div class="t" style="left:150.60px;top:530.50px;font-size:11px;transform:scaleX(0.8998);-webkit-text-stroke:0.25px;">-59</div>
<div class="t" style="left:199.70px;top:530.50px;font-size:11px;transform:scaleX(0.9213);-webkit-text-stroke:0.25px;">170</div>
<div class="t" style="left:247.60px;top:530.50px;font-size:11px;transform:scaleX(0.8667);-webkit-text-stroke:0.25px;">0</div>
<div class="t" style="left:296.60px;top:530.50px;font-size:11px;transform:scaleX(0.8667);-webkit-text-stroke:0.25px;">0</div>
<div class="t" style="left:346.20px;top:530.50px;font-size:11px;transform:scaleX(0.8667);-webkit-text-stroke:0.25px;">0</div>
<div class="t" style="left:395.70px;top:530.50px;font-size:11px;transform:scaleX(0.6333);-webkit-text-stroke:0.25px;">1</div>
<div class="t" style="left:444.90px;top:530.50px;font-size:11px;transform:scaleX(0.6333);-webkit-text-stroke:0.25px;">1</div>
<div class="t" style="left:493.40px;top:530.50px;font-size:11px;transform:scaleX(1.0215);-webkit-text-stroke:0.25px;">1/2</div>
<div class="t" style="left:542.90px;top:530.50px;font-size:11px;transform:scaleX(0.6333);-webkit-text-stroke:0.25px;">1</div>
<div class="t" style="left:69.80px;top:547.50px;font-size:11px;transform:scaleX(1.0139);-webkit-text-stroke:0.25px;">10:17:18:768</div>
<div class="t" style="left:150.60px;top:547.50px;font-size:11px;transform:scaleX(0.8998);-webkit-text-stroke:0.25px;">-59</div>
<div class="t" style="left:199.70px;top:547.50px;font-size:11px;transform:scaleX(0.9213);-webkit-text-stroke:0.25px;">160</div>
<div class="t" style="left:247.60px;top:547.50px;font-size:11px;transform:scaleX(0.8667);-webkit-text-stroke:0.25px;">0</div>
<div class="t" style="left:296.60px;top:547.50px;font-size:11px;transform:scaleX(0.8667);-webkit-text-stroke:0.25px;">0</div>
<div class="t" style="left:346.20px;top:547.50px;font-size:11px;transform:scaleX(0.8667);-webkit-text-stroke:0.25px;">0</div>
<div class="t" style="left:395.70px;top:547.50px;font-size:11px;transform:scaleX(0.6333);-webkit-text-stroke:0.25px;">1</div>
<div class="t" style="left:444.90px;top:547.50px;font-size:11px;transform:scaleX(0.6333);-webkit-text-stroke:0.25px;">1</div>
<div class="t" style="left:493.40px;top:547.50px;font-size:11px;transform:scaleX(1.0215);-webkit-text-stroke:0.25px;">1/2</div>
<div class="t" style="left:542.90px;top:547.50px;font-size:11px;transform:scaleX(0.6333);-webkit-text-stroke:0.25px;">1</div>
<div class="t" style="left:69.80px;top:564.50px;font-size:11px;transform:scaleX(1.0139);-webkit-text-stroke:0.25px;">10:17:19:529</div>
<div class="t" style="left:150.60px;top:564.50px;font-size:11px;transform:scaleX(0.8998);-webkit-text-stroke:0.25px;">-59</div>
<div class="t" style="left:199.70px;top:564.50px;font-size:11px;transform:scaleX(0.9213);-webkit-text-stroke:0.25px;">160</div>
<div class="t" style="left:247.60px;top:564.50px;font-size:11px;transform:scaleX(0.8667);-webkit-text-stroke:0.25px;">0</div>
<div class="t" style="left:296.60px;top:564.50px;font-size:11px;transform:scaleX(0.8667);-webkit-text-stroke:0.25px;">0</div>
<div class="t" style="left:346.20px;top:564.50px;font-size:11px;transform:scaleX(0.8667);-webkit-text-stroke:0.25px;">0</div>
<div class="t" style="left:395.70px;top:564.50px;font-size:11px;transform:scaleX(0.6333);-webkit-text-stroke:0.25px;">1</div>
<div class="t" style="left:444.90px;top:564.50px;font-size:11px;transform:scaleX(0.6333);-webkit-text-stroke:0.25px;">1</div>
<div class="t" style="left:493.40px;top:564.50px;font-size:11px;transform:scaleX(1.0215);-webkit-text-stroke:0.25px;">1/2</div>
<div class="t" style="left:542.90px;top:564.50px;font-size:11px;transform:scaleX(0.6333);-webkit-text-stroke:0.25px;">1</div>
<div class="t" style="left:636.50px;top:444.50px;font-size:11px;transform:scaleX(0.9254);-webkit-text-stroke:0.25px;">TimeWindow</div>
<div class="t" style="left:652.40px;top:461.50px;font-size:11px;transform:scaleX(0.9414);-webkit-text-stroke:0.25px;">full data</div>
<div class="t" style="left:653.00px;top:478.50px;font-size:11px;transform:scaleX(0.7579);-webkit-text-stroke:0.25px;">1H</div>
<div class="t" style="left:652.60px;top:495.50px;font-size:11px;transform:scaleX(0.9088);-webkit-text-stroke:0.25px;">20mn</div>
<div class="t" style="left:653.00px;top:512.50px;font-size:11px;transform:scaleX(0.8942);-webkit-text-stroke:0.25px;">10mn</div>
<div class="t" style="left:652.60px;top:529.50px;font-size:11px;transform:scaleX(0.8881);-webkit-text-stroke:0.25px;">5mn</div>
<div class="t" style="left:744.60px;top:429.50px;font-size:11px;transform:scaleX(0.9509);-webkit-text-stroke:0.25px;">Load TiouneData</div>
<div class="t" style="left:713.10px;top:455.50px;font-size:11px;transform:scaleX(0.9695);-webkit-text-stroke:0.25px;">Total Time= 459514 msec</div>
<div class="t" style="left:713.10px;top:474.50px;font-size:11px;transform:scaleX(0.9576);-webkit-text-stroke:0.25px;">= 0h 7mn 39sec 514msec</div>
<div class="t" style="left:712.60px;top:490.50px;font-size:11px;transform:scaleX(0.9626);-webkit-text-stroke:0.25px;">616 records</div>
<div class="t" style="left:717.00px;top:509.50px;font-size:11px;transform:scaleX(0.9491);-webkit-text-stroke:0.25px;">1,341 sample/sec</div>
<div class="t" style="left:779.80px;top:547.50px;font-size:11px;-webkit-text-stroke:0.25px;">Quit</div>
<div class="t" style="left:147.90px;top:590.50px;font-size:11px;transform:scaleX(0.9737);-webkit-text-stroke:0.25px;">F6DZP_TiouneData_19_03_2014_10h13mn22s.txt</div>
</body>
</html>
